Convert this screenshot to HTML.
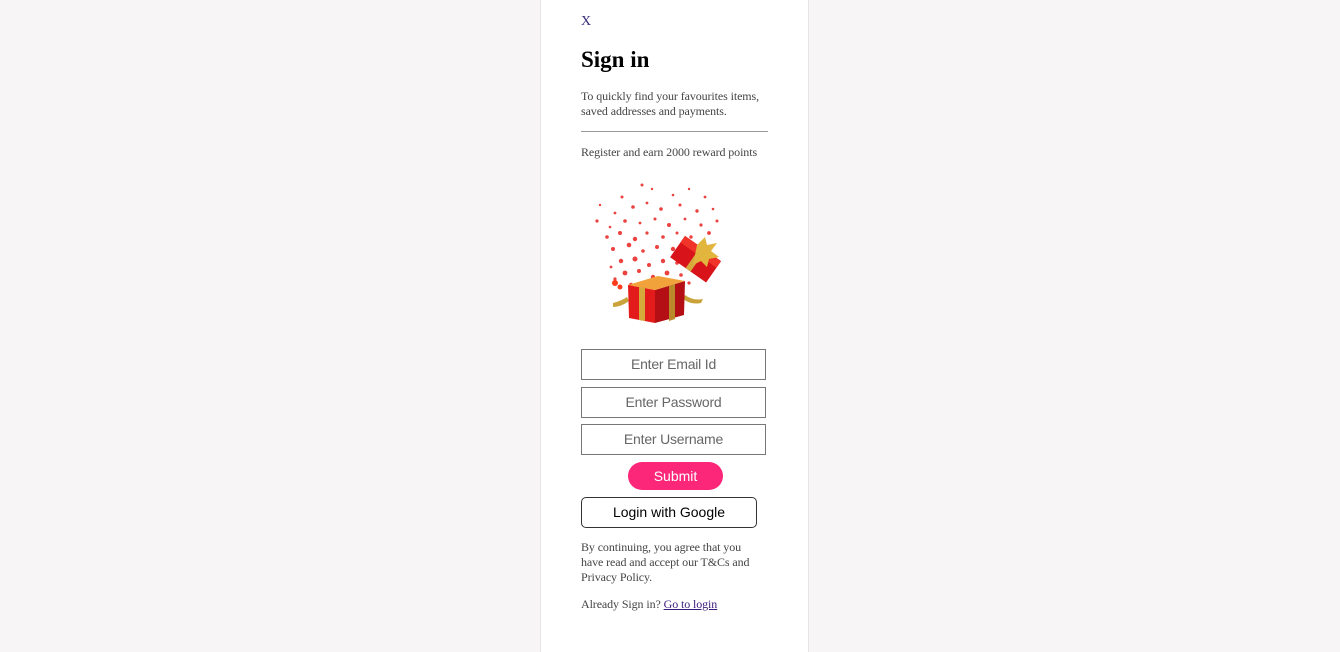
<!DOCTYPE html>
<html><head><meta charset="utf-8"><style>
html,body{margin:0;padding:0;background:#f7f5f6;width:1340px;height:652px;overflow:hidden;font-family:"Liberation Serif",serif}
.panel{position:absolute;left:540px;top:0;width:267px;height:652px;background:#fff;border-left:1px solid #e6e6e6;border-right:1px solid #e6e6e6}
.abs{position:absolute}
.x{left:40px;top:14px;font-size:14px;color:#3a2a7a}
h1{position:absolute;left:40px;top:47px;margin:0;font-size:23px;font-weight:bold;color:#000}
.sub{left:40px;top:89px;font-size:12px;line-height:15px;color:#444;width:196px;letter-spacing:-0.1px}
.hr{left:40px;top:131px;width:187px;height:1px;background:#999}
.reg{left:40px;top:145px;font-size:12px;color:#444;letter-spacing:-0.1px}
.inp{left:40px;width:183px;height:29px;border:1px solid #777;font-family:"Liberation Sans",sans-serif;font-size:14px;color:#666;text-align:center;line-height:29px;letter-spacing:-0.2px}
.sub2{left:87px;top:462px;width:95px;height:28px;border-radius:14px;background:#fc2779;color:#fff;font-family:"Liberation Sans",sans-serif;font-size:14px;text-align:center;line-height:28px}
.g{left:40px;top:497px;width:174px;height:29px;border:1px solid #333;border-radius:5px;font-family:"Liberation Sans",sans-serif;font-size:14px;color:#000;text-align:center;line-height:29px}
.terms{left:40px;top:540px;width:180px;font-size:12px;line-height:15px;color:#444;letter-spacing:-0.1px}
.al{left:40px;top:597px;font-size:12px;color:#444;letter-spacing:-0.1px}
.al a{color:#3a1a7a;text-decoration:underline}
</style></head><body>
<div class="panel">
<div class="abs x">X</div>
<h1>Sign in</h1>
<div class="abs sub">To quickly find your favourites items, saved addresses and payments.</div>
<div class="abs hr"></div>
<div class="abs reg">Register and earn 2000 reward points</div>
<svg class="abs" style="left:44px;top:175px" width="145" height="155" viewBox="0 0 145 155">
<g fill="#e8201e" opacity="0.85">
<circle cx="57" cy="10" r="1.5"/><circle cx="67" cy="14" r="1.2"/><circle cx="37" cy="22" r="1.5"/><circle cx="88" cy="20" r="1.3"/><circle cx="104" cy="14" r="1.2"/><circle cx="120" cy="22" r="1.4"/><circle cx="15" cy="30" r="1.2"/><circle cx="30" cy="38" r="1.4"/><circle cx="48" cy="32" r="1.8"/><circle cx="62" cy="28" r="1.4"/><circle cx="76" cy="34" r="1.8"/><circle cx="95" cy="30" r="1.5"/><circle cx="112" cy="36" r="1.7"/><circle cx="128" cy="34" r="1.3"/><circle cx="12" cy="46" r="1.6"/><circle cx="25" cy="52" r="1.3"/><circle cx="40" cy="46" r="1.8"/><circle cx="55" cy="48" r="1.4"/><circle cx="70" cy="44" r="1.5"/><circle cx="84" cy="50" r="2"/><circle cx="100" cy="44" r="1.4"/><circle cx="116" cy="50" r="1.6"/><circle cx="132" cy="46" r="1.5"/><circle cx="22" cy="62" r="1.8"/><circle cx="35" cy="58" r="2"/><circle cx="50" cy="64" r="2.2"/><circle cx="62" cy="58" r="1.6"/><circle cx="78" cy="62" r="1.8"/><circle cx="92" cy="58" r="1.5"/><circle cx="106" cy="62" r="1.7"/><circle cx="124" cy="58" r="1.9"/><circle cx="28" cy="74" r="2"/><circle cx="44" cy="70" r="2.3"/><circle cx="58" cy="76" r="1.8"/><circle cx="72" cy="72" r="2"/><circle cx="88" cy="74" r="2.2"/><circle cx="102" cy="72" r="1.6"/><circle cx="118" cy="74" r="1.5"/><circle cx="36" cy="86" r="2.2"/><circle cx="50" cy="84" r="2.5"/><circle cx="64" cy="90" r="2"/><circle cx="78" cy="86" r="2.2"/><circle cx="92" cy="88" r="1.8"/><circle cx="40" cy="98" r="2.4"/><circle cx="54" cy="96" r="2"/><circle cx="68" cy="102" r="2.2"/><circle cx="82" cy="98" r="2.4"/><circle cx="96" cy="100" r="1.8"/><circle cx="30" cy="104" r="1.6"/><circle cx="46" cy="110" r="2.2"/><circle cx="60" cy="112" r="2"/><circle cx="76" cy="110" r="2.3"/><circle cx="90" cy="112" r="1.8"/><circle cx="104" cy="108" r="1.6"/><circle cx="110" cy="92" r="1.5"/><circle cx="26" cy="92" r="1.4"/>
</g>
<circle cx="30" cy="108" r="3" fill="#ff3b1e"/><circle cx="35" cy="112" r="2.5" fill="#ff3b1e"/>
<path d="M28 128 q8 -2 14 -6 l2 4 q-8 6 -16 6z" fill="#c9a23a"/>
<path d="M100 120 q8 6 18 4 l-2 4 q-10 2 -18 -4z" fill="#c9a23a"/>
<polygon points="43,110 70,115 70,148 44,143" fill="#e41b1b"/>
<polygon points="70,115 100,106 99,140 70,148" fill="#b30f14"/>
<polygon points="43,110 73,101 100,106 70,115" fill="#f2a23a"/>
<polygon points="54,112 60,113 60,146 54,145" fill="#d4aa3a"/>
<polygon points="84,111 90,109 90,144 84,146" fill="#b98a2a"/>
<g transform="translate(110,85) rotate(35)">
<rect x="-22" y="-14" width="44" height="26" fill="#d8141a"/>
<rect x="-22" y="-14" width="44" height="8" fill="#f0342a"/>
<rect x="-3" y="-14" width="6" height="26" fill="#d4aa3a"/>
</g>
<path d="M112 70 l8 -8 l2 8 l10 -2 l-6 8 l8 6 l-10 2 l-2 8 l-6 -6 l-8 4 l2 -10z" fill="#e2b53c"/>
</svg>
<div class="abs inp" style="top:349px">Enter Email Id</div>
<div class="abs inp" style="top:387px">Enter Password</div>
<div class="abs inp" style="top:424px">Enter Username</div>
<div class="abs sub2">Submit</div>
<div class="abs g">Login with Google</div>
<div class="abs terms">By continuing, you agree that you have read and accept our T&amp;Cs and Privacy Policy.</div>
<div class="abs al">Already Sign in? <a>Go to login</a></div>
</div>
</body></html>
